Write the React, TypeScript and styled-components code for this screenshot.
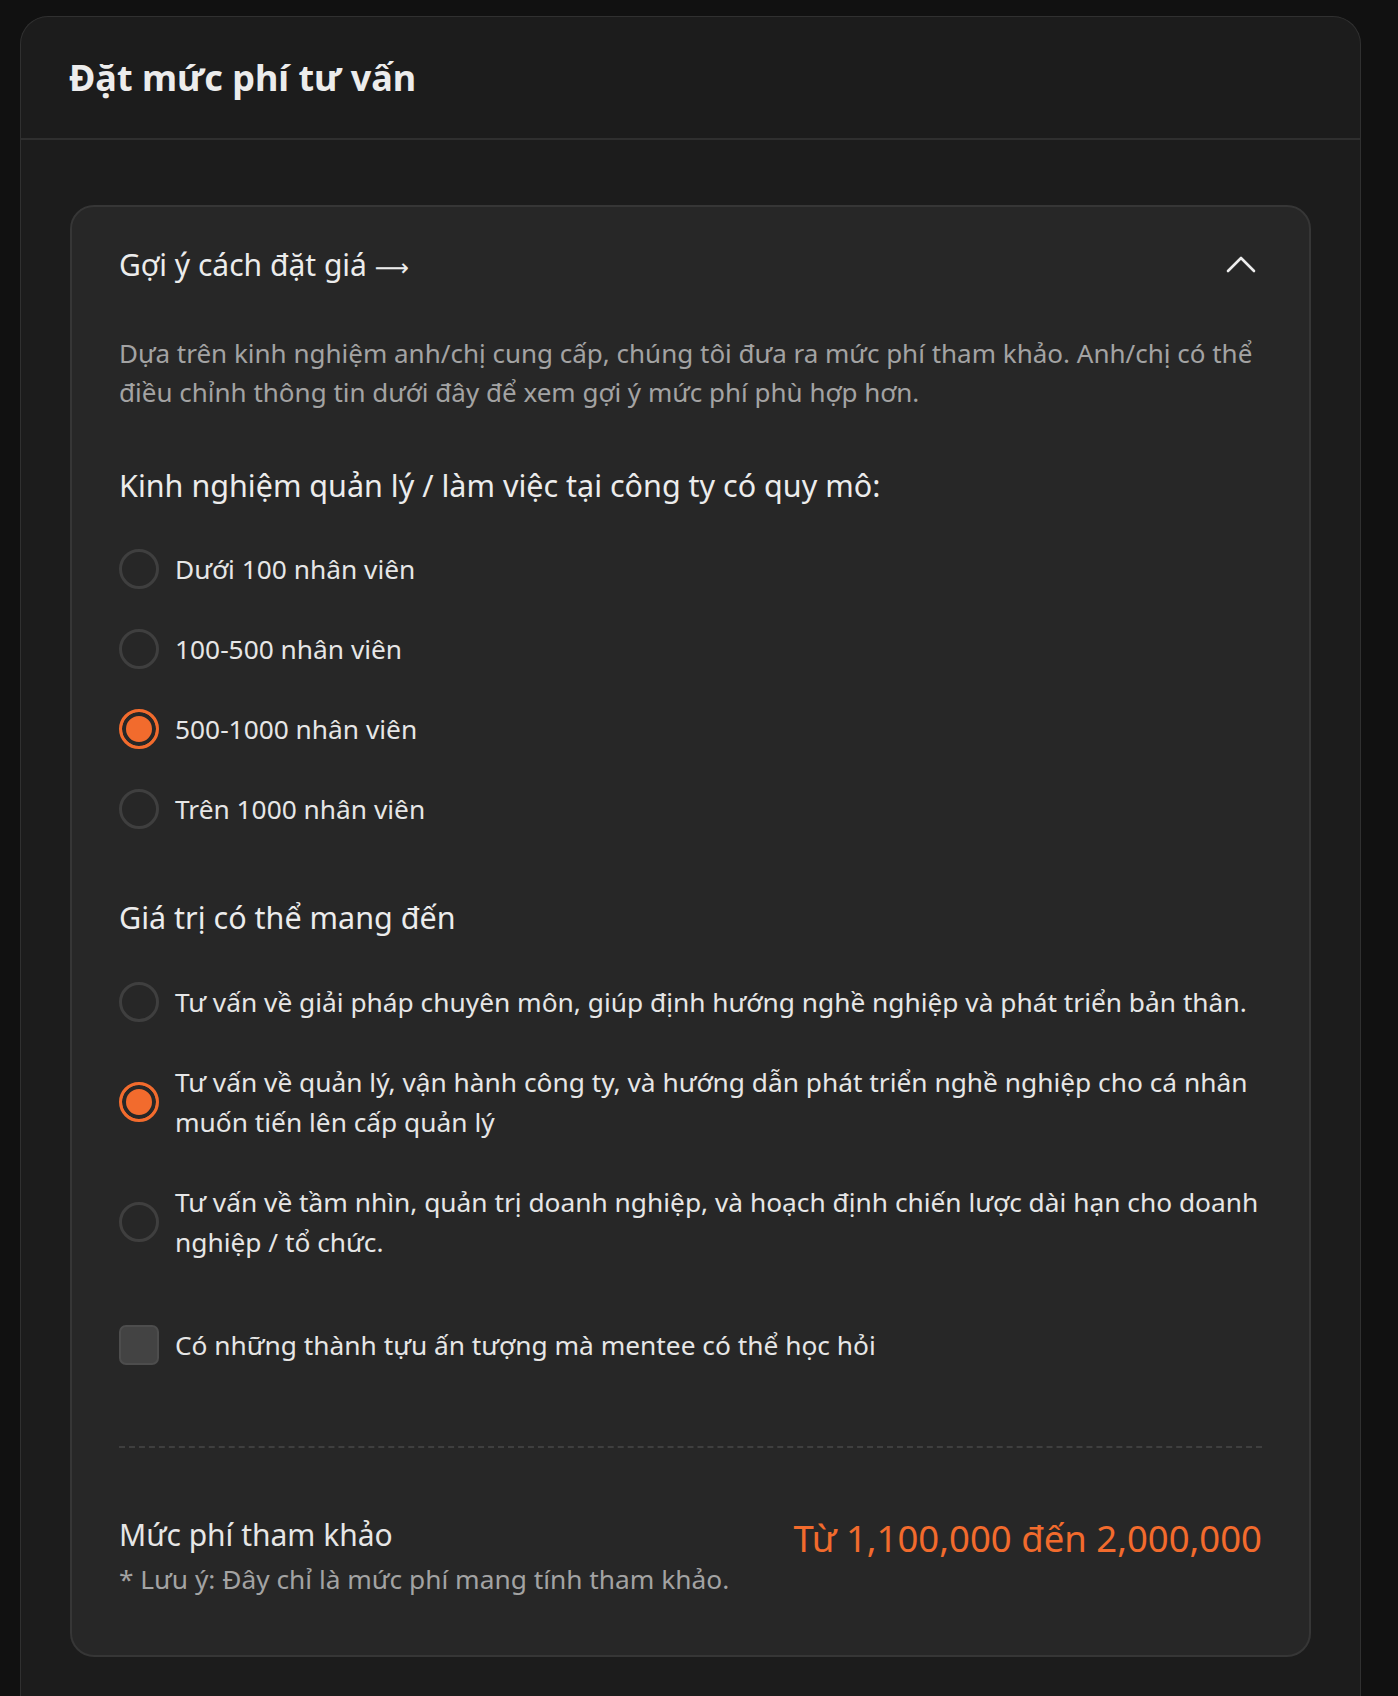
import styled, {createGlobalStyle} from "styled-components";
import {useState} from "react";

const GlobalStyle = createGlobalStyle`
    html, body {
        margin: 0;
        background: #111111;
        font-family: "Noto Sans", "Open Sans", sans-serif;
        color: #e8e8e8;
    }
`

const scaleOptions = [
    "Dưới 100 nhân viên",
    "100-500 nhân viên",
    "500-1000 nhân viên",
    "Trên 1000 nhân viên",
]

const valueOptions = [
    "Tư vấn về giải pháp chuyên môn, giúp định hướng nghề nghiệp và phát triển bản thân.",
    "Tư vấn về quản lý, vận hành công ty, và hướng dẫn phát triển nghề nghiệp cho cá nhân muốn tiến lên cấp quản lý",
    "Tư vấn về tầm nhìn, quản trị doanh nghiệp, và hoạch định chiến lược dài hạn cho doanh nghiệp / tổ chức.",
]

export default function App() {
    const [scale, setScale] = useState(2)
    const [value, setValue] = useState(1)
    const [achieved, setAchieved] = useState(false)

    return (
        <>
            <GlobalStyle/>
            <Page>
                <Panel>
                    <PanelHeader>
                        <Title>Đặt mức phí tư vấn</Title>
                    </PanelHeader>

                    <PanelBody>
                        <Accordion>
                            <AccordionHead>
                                <AccordionTitle>Gợi ý cách đặt giá <Arrow>⟶</Arrow></AccordionTitle>
                                <svg width="30" height="18" viewBox="0 0 30 18" fill="none">
                                    <polyline points="2,16 15,3 28,16" stroke="#ededed" strokeWidth="2.6"
                                              strokeLinecap="round" strokeLinejoin="round"/>
                                </svg>
                            </AccordionHead>

                            <Description>
                                Dựa trên kinh nghiệm anh/chị cung cấp, chúng tôi đưa ra mức phí tham khảo.
                                Anh/chị có thể điều chỉnh thông tin dưới đây để xem gợi ý mức phí phù hợp hơn.
                            </Description>

                            <Heading $top={53}>Kinh nghiệm quản lý / làm việc tại công ty có quy mô:</Heading>
                            <OptionList $top={44}>
                                {scaleOptions.map((label, i) => (
                                    <Option key={label} onClick={() => setScale(i)}>
                                        <Radio $checked={scale === i}/>
                                        <OptionLabel>{label}</OptionLabel>
                                    </Option>
                                ))}
                            </OptionList>

                            <Heading $top={68}>Giá trị có thể mang đến</Heading>
                            <OptionList $top={45}>
                                {valueOptions.map((label, i) => (
                                    <Option key={label} onClick={() => setValue(i)}>
                                        <Radio $checked={value === i}/>
                                        <OptionLabel>{label}</OptionLabel>
                                    </Option>
                                ))}
                            </OptionList>

                            <CheckRow onClick={() => setAchieved(!achieved)}>
                                <CheckBox $checked={achieved}/>
                                <OptionLabel>Có những thành tựu ấn tượng mà mentee có thể học hỏi</OptionLabel>
                            </CheckRow>

                            <Divider/>

                            <Summary>
                                <div>
                                    <SummaryTitle>Mức phí tham khảo</SummaryTitle>
                                    <Note>* Lưu ý: Đây chỉ là mức phí mang tính tham khảo.</Note>
                                </div>
                                <Price>Từ 1,100,000 đến 2,000,000</Price>
                            </Summary>
                        </Accordion>
                    </PanelBody>
                </Panel>
            </Page>
        </>
    );
}

const Page = styled.div`
    padding: 16px 37px 0 20px;
    min-height: 1696px;
    box-sizing: border-box;
`

const Panel = styled.section`
    background: #1c1c1c;
    border: 1px solid #303030;
    border-radius: 28px 28px 0 0;
    border-bottom: none;
`

const PanelHeader = styled.header`
    padding: 37px 48px 36px;
    border-bottom: 2px solid #2f2f2f;
`

const Title = styled.h1`
    margin: 0;
    font-size: 36px;
    line-height: 48px;
    font-weight: 700;
    color: #ececec;
`

const PanelBody = styled.div`
    padding: 65px 49px 40px;
`

const Accordion = styled.div`
    background: #272727;
    border: 2px solid #363636;
    border-radius: 24px;
    padding: 37px 47px 58px;
`

const AccordionHead = styled.div`
    display: flex;
    align-items: center;
    justify-content: space-between;
    height: 40px;

    svg {
        margin-right: 6px;
    }
`

const AccordionTitle = styled.h2`
    margin: 0;
    font-size: 30px;
    font-weight: 400;
    color: #ececec;
`

const Arrow = styled.span`
    font-family: "DejaVu Sans", sans-serif;
    font-size: 24px;
`

const Description = styled.p`
    margin: 50px 0 0;
    font-size: 26px;
    line-height: 39px;
    color: #a3a3a3;
`

const Heading = styled.h3<{ $top: number }>`
    margin: ${p => p.$top}px 0 0;
    font-size: 30.5px;
    line-height: 40px;
    font-weight: 400;
    color: #ececec;
`

const OptionList = styled.div<{ $top: number }>`
    display: flex;
    flex-direction: column;
    gap: 40px;
    margin-top: ${p => p.$top}px;
`

const Option = styled.label`
    display: flex;
    align-items: center;
    gap: 16px;
    cursor: pointer;
`

const OptionLabel = styled.span`
    font-size: 26.3px;
    line-height: 40px;
    color: #e6e6e6;
`

const Radio = styled.span<{ $checked: boolean }>`
    flex: none;
    width: 40px;
    height: 40px;
    box-sizing: border-box;
    border-radius: 50%;
    border: 3px solid ${p => p.$checked ? "#f26b2d" : "#3f3f3f"};
    background: ${p => p.$checked ? "#f26b2d" : "transparent"};
    box-shadow: ${p => p.$checked ? "inset 0 0 0 4px #272727" : "none"};
`

const CheckRow = styled.label`
    display: flex;
    align-items: center;
    gap: 16px;
    margin-top: 63px;
    cursor: pointer;
`

const CheckBox = styled.span<{ $checked: boolean }>`
    flex: none;
    width: 40px;
    height: 40px;
    box-sizing: border-box;
    border-radius: 7px;
    border: 2px solid #4d4d4d;
    background: ${p => p.$checked ? "#f26b2d" : "#434343"};
`

const Divider = styled.hr`
    margin: 81px 0 0;
    border: none;
    border-top: 2px dashed #3f3f3f;
`

const Summary = styled.div`
    display: flex;
    align-items: flex-start;
    justify-content: space-between;
    margin-top: 66px;
`

const SummaryTitle = styled.div`
    font-size: 30px;
    line-height: 42px;
    color: #e6e6e6;
`

const Note = styled.div`
    margin-top: 5px;
    font-size: 26.3px;
    line-height: 36px;
    color: #a3a3a3;
`

const Price = styled.div`
    font-size: 36.5px;
    line-height: 48px;
    color: #f26b2d;
`
